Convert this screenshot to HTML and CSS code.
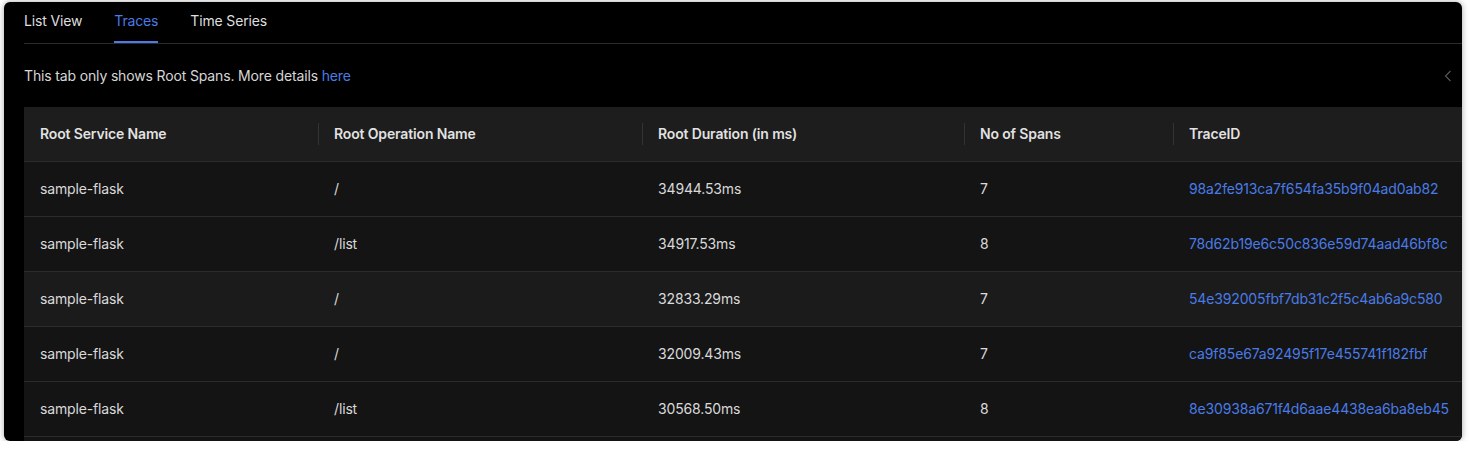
FILE: index.html
```html
<!DOCTYPE html>
<html>
<head>
<meta charset="utf-8">
<link rel="stylesheet" href="styles.css">
</head>
<body>
<div class="window">
  <div class="tabs">
    <div class="tab">List View</div>
    <div class="tab active">Traces</div>
    <div class="tab">Time Series</div>
  </div>
  <div class="info">
    <span>This tab only shows Root Spans. More details <a class="link">here</a></span>
    <svg class="chev" width="8" height="12" viewBox="0 0 8 12"><path d="M6.5 1 L1.5 6 L6.5 11" fill="none" stroke="#555" stroke-width="1.2"/></svg>
  </div>
  <div class="table">
    <div class="row head">
      <div class="cell">Root Service Name</div>
      <div class="cell sep">Root Operation Name</div>
      <div class="cell sep">Root Duration (in ms)</div>
      <div class="cell sep">No of Spans</div>
      <div class="cell sep">TraceID</div>
    </div>
    <div class="row">
      <div class="cell">sample-flask</div>
      <div class="cell">/</div>
      <div class="cell">34944.53ms</div>
      <div class="cell">7</div>
      <div class="cell link">98a2fe913ca7f654fa35b9f04ad0ab82</div>
    </div>
    <div class="row">
      <div class="cell">sample-flask</div>
      <div class="cell">/list</div>
      <div class="cell">34917.53ms</div>
      <div class="cell">8</div>
      <div class="cell link">78d62b19e6c50c836e59d74aad46bf8c</div>
    </div>
    <div class="row hover">
      <div class="cell">sample-flask</div>
      <div class="cell">/</div>
      <div class="cell">32833.29ms</div>
      <div class="cell">7</div>
      <div class="cell link">54e392005fbf7db31c2f5c4ab6a9c580</div>
    </div>
    <div class="row">
      <div class="cell">sample-flask</div>
      <div class="cell">/</div>
      <div class="cell">32009.43ms</div>
      <div class="cell">7</div>
      <div class="cell link">ca9f85e67a92495f17e455741f182fbf</div>
    </div>
    <div class="row">
      <div class="cell">sample-flask</div>
      <div class="cell">/list</div>
      <div class="cell">30568.50ms</div>
      <div class="cell">8</div>
      <div class="cell link">8e30938a671f4d6aae4438ea6ba8eb45</div>
    </div>
    <div class="row rest"></div>
  </div>
</div>
</body>
</html>
```

FILE: styles.css
```css
* { box-sizing: border-box; }
html, body { margin: 0; padding: 0; background: #fff; }
body {
  font-family: Inter, "Noto Sans", sans-serif;
  font-size: 14px;
  line-height: 22px;
  letter-spacing: -0.15px;
  color: rgba(255,255,255,0.85);
}
.window {
  margin: 2px 0 0 4px;
  width: 1458px;
  height: 439px;
  background: #000;
  border-radius: 6px;
  overflow: hidden;
  box-shadow: 0 0 6px rgba(0,0,0,0.35);
  padding-left: 20px;
}
.tabs {
  display: flex;
  gap: 32px;
  border-bottom: 1px solid #2b2b2b;
}
.tab {
  padding: 8px 0 9px;
  border-bottom: 2px solid transparent;
  color: rgba(255,255,255,0.88);
}
.tab.active {
  color: #4a7be6;
  border-bottom-color: #4a7be6;
}
.info {
  display: flex;
  justify-content: space-between;
  align-items: center;
  margin: 21px 0 20px;
  padding-right: 10px;
}
.link { color: #4a7be6; }
.table { width: 1500px; }
.row {
  display: grid;
  grid-template-columns: 294px 324px 322px 209px 351px;
  background: #141414;
  border-bottom: 1px solid #2c2c2c;
}
.row.head { background: #1d1d1d; font-weight: 600; color: rgba(255,255,255,0.88); }
.row.hover { background: #1b1b1b; }
.row.rest { height: 20px; border-bottom: none; }
.cell {
  padding: 16px 16px;
  white-space: nowrap;
  position: relative;
}
.cell.sep::before {
  content: "";
  position: absolute;
  left: 0;
  top: 16px;
  height: 22px;
  width: 1px;
  background: #333;
}
```
